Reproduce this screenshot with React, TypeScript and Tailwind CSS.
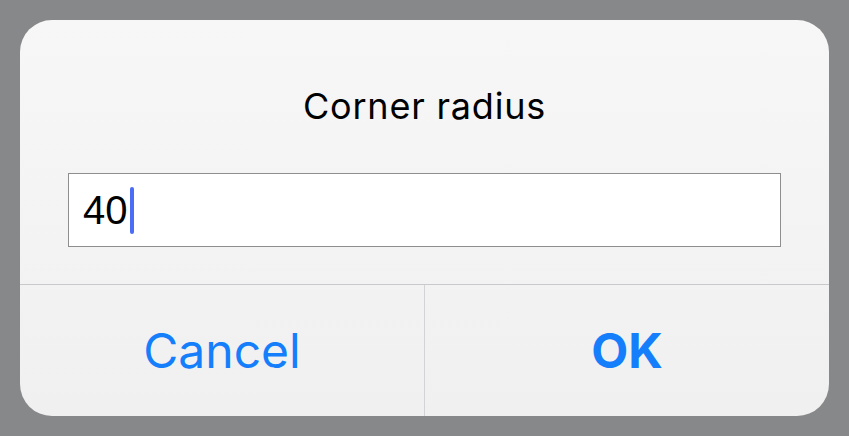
export default function App() {
    return (
        <div className="w-[849px] h-[436px] bg-[#87888a] p-5">
            {/* Alert */}
            <div className="flex flex-col h-full rounded-[32px] overflow-hidden bg-gradient-to-b from-[#f7f7f7] to-[#f0f0f0]" style={{ fontFamily: 'Inter, "Liberation Sans", sans-serif' }}>
                <div className="h-[264px] flex flex-col">
                    <div className="pt-[68px] text-center text-[36px] leading-[36px] tracking-[0.8px] text-black">
                        Corner radius
                    </div>
                    {/* Text field */}
                    <div className="mx-12 mt-[49px] h-[74px] border border-[#8e8e8e] bg-white flex items-center pl-[14px]">
                        <span className="text-[40px] leading-none text-black" style={{ fontFamily: '"Liberation Sans", sans-serif' }}>40</span>
                        <span className="ml-[2px] w-[4px] h-[47px] rounded-full bg-[#4a6cf7]" />
                    </div>
                </div>
                {/* Buttons */}
                <div className="flex flex-1 border-t border-[#c9c9cb]">
                    <button className="flex-1 flex items-center justify-center text-[48px] text-[#157efb]">
                        Cancel
                    </button>
                    <button className="flex-1 flex items-center justify-center border-l border-[#d3d3d5] text-[48px] font-bold text-[#157efb]">
                        OK
                    </button>
                </div>
            </div>
        </div>
    )
}
